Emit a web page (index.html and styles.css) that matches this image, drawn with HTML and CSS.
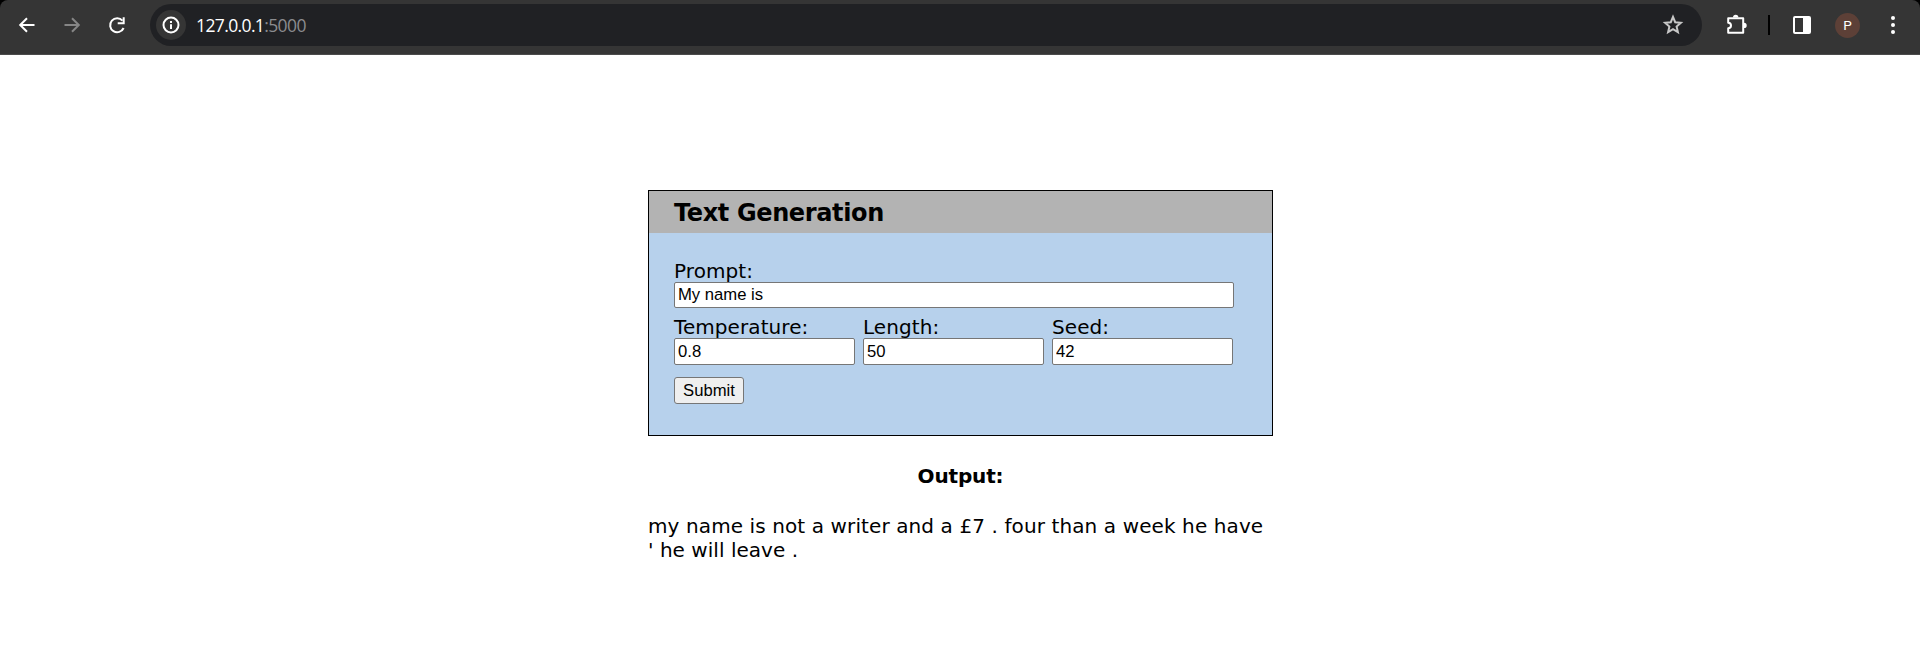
FILE: index.html
```html
<!DOCTYPE html>
<html lang="en">
<head>
<meta charset="utf-8">
<title>Text Generation</title>
<link rel="stylesheet" href="styles.css">
</head>
<body>
<header class="browser">
  <div class="toolbar">
    <nav class="nav">
      <svg class="icon" viewBox="0 0 24 24"><path d="M19.500 12H6M12 5.200L5.200 12l6.800 6.800"/></svg>
      <svg class="icon dim" viewBox="0 0 24 24"><path d="M4.500 12H18M12 5.200l6.800 6.800-6.800 6.800"/></svg>
      <svg class="icon" viewBox="0 0 24 24"><path d="M18.600 15A7 7 0 1 1 17.500 7.700"/><path d="M18.700 4.200v6h-6"/></svg>
    </nav>
    <div class="address">
      <span class="site"><svg class="info" viewBox="0 0 20 20"><circle cx="10" cy="10" r="7.500"/><path d="M10 9.200v4.800M10 6v2"/></svg></span>
      <span class="url">127.0.0.1<span class="port">:5000</span></span>
      <svg class="star" viewBox="0 0 22 22"><path d="M11 2.900l2.200 5.300 5.700.5-4.300 3.800 1.300 5.600-4.900-3-4.900 3 1.300-5.600-4.300-3.800 5.700-.5z"/></svg>
    </div>
    <div class="tools">
      <svg class="puzzle" viewBox="0 0 24 24"><path d="M4.200 5.200h15v14.600h-15v-4.500a2.800 2.800 0 0 0 0-5.600z" stroke-linejoin="round"/><path class="fill" d="M9 4.500a2.700 2.700 0 0 1 5.400 0zM20 9.700a2.700 2.700 0 0 1 0 5.400z"/></svg>
      <span class="divider"></span>
      <svg class="panel" viewBox="0 0 20 20"><rect x="2" y="2" width="16" height="16" rx="1"/><path class="fill" d="M11 2h7v16h-7z"/></svg>
      <span class="avatar">P</span>
      <svg class="more" viewBox="0 0 6 20"><circle cx="3" cy="3" r="2"/><circle cx="3" cy="10" r="2"/><circle cx="3" cy="17" r="2"/></svg>
    </div>
  </div>
</header>
<main class="page">
  <form class="card">
    <h1 class="title">Text Generation</h1>
    <div class="fields">
      <label class="field prompt"><span class="label">Prompt:</span><input type="text" value="My name is"></label>
      <div class="row">
        <label class="field"><span class="label">Temperature:</span><input type="text" value="0.8"></label>
        <label class="field"><span class="label">Length:</span><input type="text" value="50"></label>
        <label class="field"><span class="label">Seed:</span><input type="text" value="42"></label>
      </div>
      <button class="submit" type="button">Submit</button>
    </div>
  </form>
  <h2 class="heading">Output:</h2>
  <p class="output">my name is not a writer and a £7 . four than a week he have<br><span class="second">' he will leave .</span></p>
</main>
</body>
</html>
```
FILE: styles.css
```css
* { box-sizing: border-box; }
body { margin: 0; background: #fff; color: #000; font: 20px/24px Verdana, "DejaVu Sans", sans-serif; overflow: hidden; }
.browser { height: 55px; background: #000; }
.toolbar { height: 55px; display: flex; padding: 4px 0 0 15px; background: #353535; border-bottom: 1px solid #4b4b4b; border-radius: 8px 8px 0 0; }
svg { display: block; fill: none; stroke: #fff; stroke-width: 2; flex: none; }
.fill { fill: #fff; stroke: none; }
.nav { display: flex; gap: 21px; width: 135px; padding-top: 9px; }
.icon { width: 24px; height: 24px; }
.dim { stroke: #868686; }
.address { width: 1552px; height: 42px; border-radius: 21px; background: #202124; display: flex; align-items: center; padding: 0 18px 0 6px; }
.site { width: 30px; height: 30px; border-radius: 50%; background: #353535; display: flex; align-items: center; justify-content: center; }
.info { width: 20px; height: 20px; }
.url { margin-left: 10px; font: 17.5px/24px "Open Sans", "Noto Sans", sans-serif; color: #fff; flex: 1; letter-spacing: -.62px; }
.port { color: #8b8c8f; }
.star { width: 22px; height: 22px; stroke: #c7c7c7; }
.tools { display: flex; align-items: center; height: 42px; padding-left: 22px; }
.puzzle { width: 24px; height: 24px; }
.divider { width: 2px; height: 20px; margin-left: 20px; background: #000; }
.panel { width: 20px; height: 20px; margin-left: 22px; }
.avatar { width: 25px; height: 25px; margin-left: 23px; border-radius: 50%; background: #5d4037; color: #fff; text-align: center; font: 13.5px/25px Roboto, sans-serif; }
.more { width: 6px; height: 20px; margin-left: 30px; fill: #fff; stroke: none; }
.page { width: 625px; margin-left: 648px; padding-top: 135px; }
.card { height: 246px; border: 1px solid #000; background: #b7d1ec; }
.title { margin: 0; height: 42px; padding-left: 25px; background: #b3b3b3; font-size: 24px; line-height: 45px; letter-spacing: -.37px; }
.fields { padding: 25px 25px 0; }
.field { display: flex; flex-direction: column; }
.label { height: 24px; line-height: 26px; letter-spacing: .08px; }
.prompt { width: 560px; }
.row { display: flex; gap: 8px; padding-top: 6px; }
.row .field { width: 181px; }
.row input { height: 27px; }
input { width: 100%; height: 26px; padding: 0 3px; border: 1px solid #767676; border-radius: 2px; background: #fff; color: #000; font: 16.67px "Liberation Sans", Arial, sans-serif; }
.submit { display: block; width: 70px; height: 27px; margin-top: 12px; padding: 0; border: 1px solid #767676; border-radius: 3px; background: #efefef; color: #000; font: 16.67px "Liberation Sans", Arial, sans-serif; }
.heading { margin: 28px 0 0; font-size: 20px; line-height: 24px; text-align: center; letter-spacing: -.15px; }
.output { margin: 26px 0 0; white-space: nowrap; letter-spacing: .105px; }
.second { letter-spacing: .03px; }
```
